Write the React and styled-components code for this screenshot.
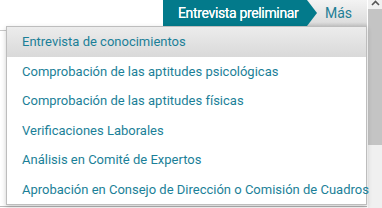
import React from 'react';
import styled, { createGlobalStyle } from 'styled-components';

const GlobalStyle = createGlobalStyle`
  html, body {
    margin: 0;
    padding: 0;
    background: #fff;
    font-family: Roboto, "Liberation Sans", sans-serif;
  }
`;

const Page = styled.div`
  display: flex;
  width: 382px;
  height: 208px;
  overflow: hidden;
`;

const Main = styled.div`
  position: relative;
  width: 367px;
  flex: none;
`;

const Bar = styled.div`
  display: flex;
  justify-content: flex-end;
  height: 26px;
`;

const Step = styled.div`
  position: relative;
  display: flex;
  align-items: center;
  box-sizing: border-box;
  width: ${p => p.width}px;
  padding-left: ${p => p.pad}px;
  margin-right: ${p => (p.arrow ? -10 : 0)}px;
  font-size: 14px;
  color: ${p => (p.active ? '#fff' : '#1e7e96')};
  text-shadow: ${p => (p.active ? '0 0 0.4px #fff' : 'none')};
  background: ${p => (p.active ? '#037a8b' : 'linear-gradient(#f3f3f3, #dedede 85%, #c9c9c9)')};
  clip-path: ${p => (p.arrow ? 'polygon(0 0, calc(100% - 10px) 0, 100% 50%, calc(100% - 10px) 100%, 0 100%)' : 'none')};
  z-index: ${p => (p.arrow ? 2 : 1)};
`;

const Label = styled.span`
  display: inline-block;
  letter-spacing: -0.35px;
`;

const Content = styled.div`
  margin-top: 4px;
  height: 175px;
  border-top: 1px solid #c8c8c8;
  border-bottom: 1px solid #b8b8b8;
`;

const Menu = styled.ul`
  position: absolute;
  top: 26px;
  left: 6px;
  right: 0;
  margin: 0;
  padding: 0;
  list-style: none;
  background: #fff;
  border: 1px solid #bdbdbd;
  box-shadow: 0 2px 5px rgba(0, 0, 0, 0.2);
  z-index: 3;
`;

const Item = styled.li`
  height: 29.5px;
  display: flex;
  align-items: center;
  padding-left: 15px;
  font-size: 13px;
  color: #1b7f98;
  white-space: nowrap;
  background: ${p => (p.active ? 'linear-gradient(#ececec, #d9d9d9)' : '#fff')};
`;

const Scroll = styled.div`
  display: flex;
  flex-direction: column;
  width: 14px;
  margin-left: 1px;
  background: #f0f0f0;
`;

const ArrowBtn = styled.div`
  height: 9px;
  display: flex;
  justify-content: center;
  align-items: flex-start;
`;

const Thumb = styled.div`
  height: 136px;
  background: #c4c4c4;
`;

const items = [
  'Entrevista de conocimientos',
  'Comprobación de las aptitudes psicológicas',
  'Comprobación de las aptitudes físicas',
  'Verificaciones Laborales',
  'Análisis en Comité de Expertos',
  'Aprobación en Consejo de Dirección o Comisión de Cuadros',
];

export default function App() {
  return (
    <>
      <GlobalStyle />
      <Page>
        <Main>
          <Bar>
            <Step active arrow width={154} pad={15}><Label>Entrevista preliminar</Label></Step>
            <Step width={60} pad={18}>Más</Step>
          </Bar>
          <Content />
          <Menu>
            {items.map((t, i) => (
              <Item key={i} active={i === 0}>{t}</Item>
            ))}
          </Menu>
        </Main>
        <Scroll>
          <ArrowBtn>
            <svg width="9" height="6" viewBox="0 0 9 6">
              <path d="M1 5 L4.5 1.5 L8 5" fill="none" stroke="#555" strokeWidth="1.6" />
            </svg>
          </ArrowBtn>
          <Thumb />
        </Scroll>
      </Page>
    </>
  );
}
